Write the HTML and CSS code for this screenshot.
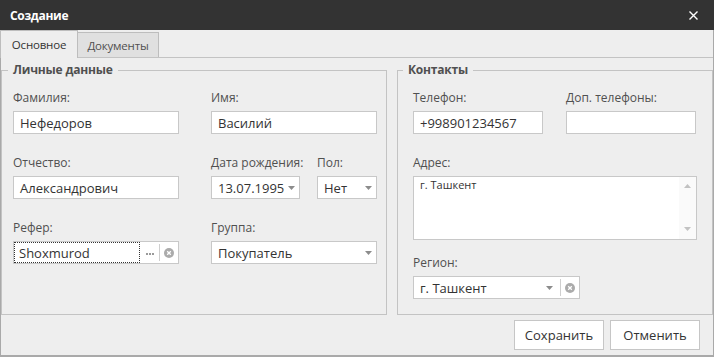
FILE: index.html
```html
<!DOCTYPE html>
<html lang="ru">
<head>
    <meta charset="UTF-8">
    <title>Создание</title>
    <link rel="stylesheet" href="styles.css">
</head>
<body>
<div class="window">
    <div class="titlebar">
        <span class="title">Создание</span>
        <span class="close">
            <svg width="9" height="9" viewBox="0 0 9 9"><path d="M0.5 0.5L8.5 8.5M8.5 0.5L0.5 8.5" stroke="#fff" stroke-width="1.4"/></svg>
        </span>
    </div>
    <div class="frame">
        <div class="tabs">
            <div class="tab tab-active">Основное</div>
            <div class="tab">Документы</div>
        </div>
        <div class="panel">
            <fieldset class="group group-personal">
                <legend>Личные данные</legend>
                <div class="grid">
                    <div class="field">
                        <label>Фамилия:</label>
                        <div class="input">Нефедоров</div>
                    </div>
                    <div class="field">
                        <label>Имя:</label>
                        <div class="input">Василий</div>
                    </div>
                    <div class="field">
                        <label>Отчество:</label>
                        <div class="input">Александрович</div>
                    </div>
                    <div class="pair">
                        <div class="field field-date">
                            <label>Дата рождения:</label>
                            <div class="input combo">
                                <span class="combo-text">13.07.1995</span>
                                <span class="arrow"><svg width="7" height="4" viewBox="0 0 7 4"><path d="M0 0H7L3.5 4Z" fill="#8c8c8c"/></svg></span>
                            </div>
                        </div>
                        <div class="field field-sex">
                            <label>Пол:</label>
                            <div class="input combo">
                                <span class="combo-text">Нет</span>
                                <span class="arrow"><svg width="7" height="4" viewBox="0 0 7 4"><path d="M0 0H7L3.5 4Z" fill="#8c8c8c"/></svg></span>
                            </div>
                        </div>
                    </div>
                    <div class="field">
                        <label>Рефер:</label>
                        <div class="input combo refer">
                            <span class="focus-text">Shoxmurod</span>
                            <span class="dots"><svg width="8" height="2" viewBox="0 0 8 2"><rect x="0" y="0" width="2" height="2" fill="#9a9a9a"/><rect x="3" y="0" width="2" height="2" fill="#9a9a9a"/><rect x="6" y="0" width="2" height="2" fill="#9a9a9a"/></svg></span>
                            <span class="sep"></span>
                            <span class="clear"><svg width="10" height="10" viewBox="0 0 10 10"><circle cx="5" cy="5" r="5" fill="#ababab"/><path d="M3.2 3.2L6.8 6.8M6.8 3.2L3.2 6.8" stroke="#fff" stroke-width="1.3"/></svg></span>
                        </div>
                    </div>
                    <div class="field">
                        <label>Группа:</label>
                        <div class="input combo">
                            <span class="combo-text">Покупатель</span>
                            <span class="arrow"><svg width="7" height="4" viewBox="0 0 7 4"><path d="M0 0H7L3.5 4Z" fill="#8c8c8c"/></svg></span>
                        </div>
                    </div>
                </div>
            </fieldset>
            <fieldset class="group group-contacts">
                <legend>Контакты</legend>
                <div class="grid grid-phones">
                    <div class="field">
                        <label>Телефон:</label>
                        <div class="input">+998901234567</div>
                    </div>
                    <div class="field">
                        <label>Доп. телефоны:</label>
                        <div class="input"></div>
                    </div>
                </div>
                <div class="field field-address">
                    <label>Адрес:</label>
                    <div class="memo">
                        <div class="memo-text">г. Ташкент</div>
                        <div class="memo-scroll">
                            <svg width="7" height="4" viewBox="0 0 7 4"><path d="M0 4H7L3.5 0Z" fill="#c2c2c2"/></svg>
                            <svg width="7" height="4" viewBox="0 0 7 4"><path d="M0 0H7L3.5 4Z" fill="#c2c2c2"/></svg>
                        </div>
                    </div>
                </div>
                <div class="field field-region">
                    <label>Регион:</label>
                    <div class="input combo region">
                        <span class="combo-text">г. Ташкент</span>
                        <span class="arrow arrow-wide"><svg width="7" height="4" viewBox="0 0 7 4"><path d="M0 0H7L3.5 4Z" fill="#8c8c8c"/></svg></span>
                        <span class="sep"></span>
                        <span class="clear"><svg width="10" height="10" viewBox="0 0 10 10"><circle cx="5" cy="5" r="5" fill="#ababab"/><path d="M3.2 3.2L6.8 6.8M6.8 3.2L3.2 6.8" stroke="#fff" stroke-width="1.3"/></svg></span>
                    </div>
                </div>
            </fieldset>
        </div>
        <div class="footer">
            <button class="btn">Сохранить</button>
            <button class="btn">Отменить</button>
        </div>
    </div>
</div>
</body>
</html>
```

FILE: styles.css
```css
html, body {
    margin: 0;
    padding: 0;
}
body {
    font-family: "Open Sans", "Noto Sans", sans-serif;
    font-size: 12px;
    color: #333;
    background: #eee;
}
.window {
    width: 714px;
    height: 357px;
    display: flex;
    flex-direction: column;
    background: #eee;
}
.titlebar {
    height: 30px;
    flex: none;
    background: #333;
    color: #fff;
    display: flex;
    align-items: center;
    justify-content: space-between;
    padding: 0 16px 0 10px;
}
.title {
    font-weight: 700;
    font-size: 12px;
    letter-spacing: -0.3px;
}
.close {
    display: flex;
}
.frame {
    flex: 1;
    display: flex;
    flex-direction: column;
    border: 1px solid #a9a9a9;
    border-top: none;
    border-bottom-width: 2px;
}
.tabs {
    height: 27px;
    flex: none;
    display: flex;
    align-items: flex-end;
}
.tab {
    width: 81px;
    height: 25px;
    box-sizing: border-box;
    border: 1px solid #bdbdbd;
    border-bottom: none;
    background: #e0e0e0;
    color: #505050;
    font-size: 11.5px;
    letter-spacing: -0.2px;
    display: flex;
    align-items: center;
    justify-content: center;
}
.tab + .tab {
    border-left: none;
}
.tab-active {
    position: relative;
    width: 78px;
    height: 28px;
    margin: 0 0 -1px -1px;
    background: #eee;
    color: #333;
}
.panel {
    height: 258px;
    box-sizing: border-box;
    flex: none;
    border-top: 1px solid #c3c3c3;
    padding-top: 4px;
    display: flex;
    gap: 10px;
}
.group {
    margin: 0;
    min-width: 0;
    box-sizing: border-box;
    border: 1px solid #c3c3c3;
}
.group legend {
    font-weight: 700;
    color: #505050;
    line-height: 16px;
    padding: 0 5px;
    margin-left: -5px;
    letter-spacing: -0.2px;
}
.group-personal {
    width: 386px;
    padding: 12px 8px 0 11px;
}
.group-contacts {
    width: 316px;
    padding: 12px 15px 0 15px;
}
.group-contacts legend {
    margin-left: -10px;
}
.grid {
    display: grid;
    grid-template-columns: 166px 166px;
    column-gap: 32px;
    row-gap: 21px;
}
.grid-phones {
    grid-template-columns: 130px 130px;
    column-gap: 23px;
}
.field label {
    display: block;
    line-height: 16px;
    margin-bottom: 5px;
    color: #505050;
    white-space: nowrap;
}
.pair {
    display: flex;
    gap: 17px;
}
.field-date {
    width: 89px;
}
.field-sex {
    width: 60px;
}
.field-address {
    margin-top: 21px;
}
.field-region {
    margin-top: 15px;
    width: 167px;
}
.input {
    box-sizing: border-box;
    height: 23px;
    border: 1px solid #c8c8c8;
    background: #fff;
    padding: 0 6px;
    font-size: 13px;
    color: #333;
    display: flex;
    align-items: center;
    white-space: nowrap;
}
.combo {
    padding-right: 0;
}
.combo-text {
    flex: 1;
}
.arrow {
    width: 16px;
    display: flex;
    justify-content: center;
}
.arrow-wide {
    width: 22px;
}
.refer {
    padding: 0;
}
.focus-text {
    flex: 1;
    align-self: stretch;
    display: flex;
    align-items: center;
    padding: 0 4px;
    border: 1px dotted #333;
}
.dots {
    width: 19px;
    display: flex;
    justify-content: center;
    padding-top: 2px;
}
.sep {
    width: 1px;
    height: 17px;
    background: #cfcfcf;
}
.clear {
    width: 18px;
    display: flex;
    justify-content: center;
}
.memo {
    box-sizing: border-box;
    height: 64px;
    border: 1px solid #c8c8c8;
    background: #fff;
    display: flex;
}
.memo-text {
    flex: 1;
    padding: 0 6px;
    font-size: 11px;
    line-height: 16px;
    color: #333;
}
.memo-scroll {
    width: 17px;
    background: #fafafa;
    display: flex;
    flex-direction: column;
    align-items: center;
    justify-content: space-between;
    padding: 7px 0 8px;
}
.footer {
    height: 40px;
    flex: none;
    display: flex;
    justify-content: flex-end;
    align-items: center;
    gap: 6px;
    padding-right: 13px;
}
.btn {
    width: 90px;
    height: 30px;
    border: 1px solid #c6c6c6;
    background: #fff;
    font-family: inherit;
    font-size: 13px;
    color: #333;
    padding: 0;
}
```
